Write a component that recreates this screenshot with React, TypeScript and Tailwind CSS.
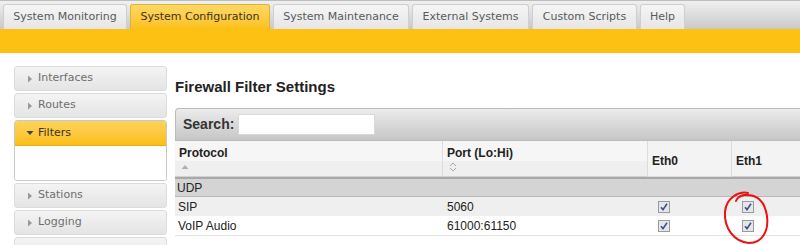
import React from 'react';

const tabs = [
  { label: 'System Monitoring', w: 'w-[124px]' },
  { label: 'System Configuration', w: 'w-[140px]', active: true },
  { label: 'System Maintenance', w: 'w-[136px]' },
  { label: 'External Systems', w: 'w-[117px]' },
  { label: 'Custom Scripts', w: 'w-[105px]' },
  { label: 'Help', w: 'w-[45px]' },
];

function Arrow({ open }: { open?: boolean }) {
  return open ? (
    <svg width="8" height="8" viewBox="0 0 8 8" className="mr-[4px]">
      <path d="M0.5 2 L7.5 2 L4 6 Z" fill="#444" />
    </svg>
  ) : (
    <svg width="8" height="8" viewBox="0 0 8 8" className="mr-[4px]">
      <path d="M2 0.5 L6 4 L2 7.5 Z" fill="#999" />
    </svg>
  );
}

function SideItem({ label }: { label: string }) {
  return (
    <div className="h-[25px] flex items-center pl-[11px] rounded-[3px] border border-[#dcdcdc] bg-gradient-to-b from-[#f4f4f4] to-[#e4e4e4] text-[11px] text-[#6e6e6e]">
      <Arrow />
      {label}
    </div>
  );
}

function Check() {
  return (
    <svg width="12" height="12" viewBox="0 0 12 12">
      <rect x="0.5" y="0.5" width="11" height="11" fill="#e6e6e6" stroke="#9a9a9a" />
      <path d="M3 6.2 L5 8.6 L9 2.8" fill="none" stroke="#3a4f9a" strokeWidth="1.6" />
    </svg>
  );
}

function SortIcon({ both }: { both?: boolean }) {
  return both ? (
    <svg width="8" height="10" viewBox="0 0 8 10">
      <path d="M1 4 L4 1 L7 4" fill="none" stroke="#aaa" strokeWidth="1" />
      <path d="M1 6 L4 9 L7 6" fill="none" stroke="#aaa" strokeWidth="1" />
    </svg>
  ) : (
    <svg width="8" height="6" viewBox="0 0 8 6">
      <path d="M0.5 5 L4 1 L7.5 5 Z" fill="#b0b0b0" />
    </svg>
  );
}

export default function App() {
  return (
    <div className="w-[800px] h-[245px] bg-white overflow-hidden relative">
      {/* tab bar */}
      <div className="h-[29px] border-t border-[#bdbdbd] bg-gradient-to-b from-[#f0f0f0] to-[#c9c9c9] flex items-end pl-[3px] gap-[3px] font-['DejaVu_Sans',sans-serif] text-[11px]">
        {tabs.map((t) =>
          t.active ? (
            <div
              key={t.label}
              className={`${t.w} h-[25px] rounded-t-[3px] border border-b-0 border-[#e0b23a] bg-gradient-to-b from-[#fdd863] to-[#fcc114] flex items-center justify-center text-[#3a3320]`}
            >
              {t.label}
            </div>
          ) : (
            <div
              key={t.label}
              className={`${t.w} h-[25px] rounded-t-[3px] border border-b-0 border-[#cfcfcf] bg-gradient-to-b from-[#f5f5f5] to-[#e6e6e6] flex items-center justify-center text-[#5a5a5a]`}
            >
              {t.label}
            </div>
          )
        )}
      </div>
      <div className="h-[24px] bg-[#fcc112]" />

      <div className="flex">
        {/* sidebar */}
        <div className="w-[153px] ml-[14px] mt-[13px] flex flex-col gap-[2px] font-['DejaVu_Sans',sans-serif]">
          <SideItem label="Interfaces" />
          <SideItem label="Routes" />
          <div className="rounded-[3px] border border-[#c8c8c8] overflow-hidden">
            <div className="h-[25px] flex items-center pl-[11px] bg-gradient-to-b from-[#fdd35a] to-[#fbbf12] border-b border-[#e5ad10] text-[11px] text-[#3a3320]">
              <Arrow open />
              Filters
            </div>
            <div className="h-[34px] bg-white" />
          </div>
          <SideItem label="Stations" />
          <SideItem label="Logging" />
          <SideItem label="" />
        </div>

        {/* main */}
        <div className="ml-[8px] flex-1 font-['Liberation_Sans',Arial,sans-serif]">
          <div className="mt-[24px] h-[31px] text-[15px] font-bold text-[#222] leading-[20px]">Firewall Filter Settings</div>
          <div className="h-[33px] border border-r-0 border-[#bcbcbc] rounded-tl-[4px] bg-gradient-to-b from-[#ececec] to-[#c6c6c6] flex items-center pl-[7px]">
            <span className="text-[14px] font-bold text-[#333] mr-[4px]">Search:</span>
            <div className="w-[137px] h-[21px] bg-white border border-[#d8d8d8]" />
          </div>
          <div className="grid grid-cols-[268px_205px_84px_1fr] text-[12px] text-[#222]">
            {/* header */}
            <div className="h-[36px] border-r border-[#dcdcdc] flex flex-col">
              <div className="h-[20px] bg-[#f6f6f6] font-bold pl-[4px] pt-[3px]">Protocol</div>
              <div className="flex-1 bg-[#efefef] pl-[6px] pt-[3px] border-b border-[#d0d0d0]">
                <SortIcon />
              </div>
            </div>
            <div className="h-[36px] border-r border-[#dcdcdc] flex flex-col">
              <div className="h-[20px] bg-[#f6f6f6] font-bold pl-[4px] pt-[3px]">Port (Lo:Hi)</div>
              <div className="flex-1 bg-[#efefef] pl-[6px] pt-[1px] border-b border-[#d0d0d0]">
                <SortIcon both />
              </div>
            </div>
            <div className="h-[36px] border-r border-[#dcdcdc] bg-[#f3f3f3] font-bold flex items-center pl-[4px] pt-[4px] border-b border-[#d0d0d0]">Eth0</div>
            <div className="h-[36px] bg-[#f3f3f3] font-bold flex items-center pl-[4px] pt-[4px] border-b border-[#d0d0d0]">Eth1</div>

            {/* group */}
            <div className="col-span-4 h-[19px] bg-[#d4d4d4] border-t-2 border-[#a8a8a8] pl-[2px] flex items-center">UDP</div>

            {/* rows */}
            <div className="h-[20px] bg-[#efefef] border-t border-[#b8b8b8] pl-[3px] flex items-center">SIP</div>
            <div className="h-[20px] bg-[#efefef] border-t border-[#b8b8b8] pl-[4px] flex items-center">5060</div>
            <div className="h-[20px] bg-[#efefef] border-t border-[#b8b8b8] pl-[10px] flex items-center"><Check /></div>
            <div className="h-[20px] bg-[#efefef] border-t border-[#b8b8b8] pl-[10px] flex items-center"><Check /></div>

            <div className="h-[20px] bg-white border-b border-[#e2e2e2] pl-[3px] flex items-center">VoIP Audio</div>
            <div className="h-[20px] bg-white border-b border-[#e2e2e2] pl-[4px] flex items-center">61000:61150</div>
            <div className="h-[20px] bg-white border-b border-[#e2e2e2] pl-[10px] flex items-center"><Check /></div>
            <div className="h-[20px] bg-white border-b border-[#e2e2e2] pl-[10px] flex items-center"><Check /></div>
          </div>
        </div>
      </div>

      {/* hand-drawn red circle annotation */}
      <svg className="absolute left-[718px] top-[188px]" width="60" height="57" viewBox="0 0 60 57">
        <path
          d="M30 5 C 22 3, 8 9, 7 24 C 6 40, 16 54, 31 55 C 45 55, 51 42, 49 28 C 47 14, 40 6, 26 7 C 22 8, 19 10, 18 13"
          fill="none"
          stroke="#ee1111"
          strokeWidth="2"
          strokeLinecap="round"
        />
      </svg>
    </div>
  );
}
